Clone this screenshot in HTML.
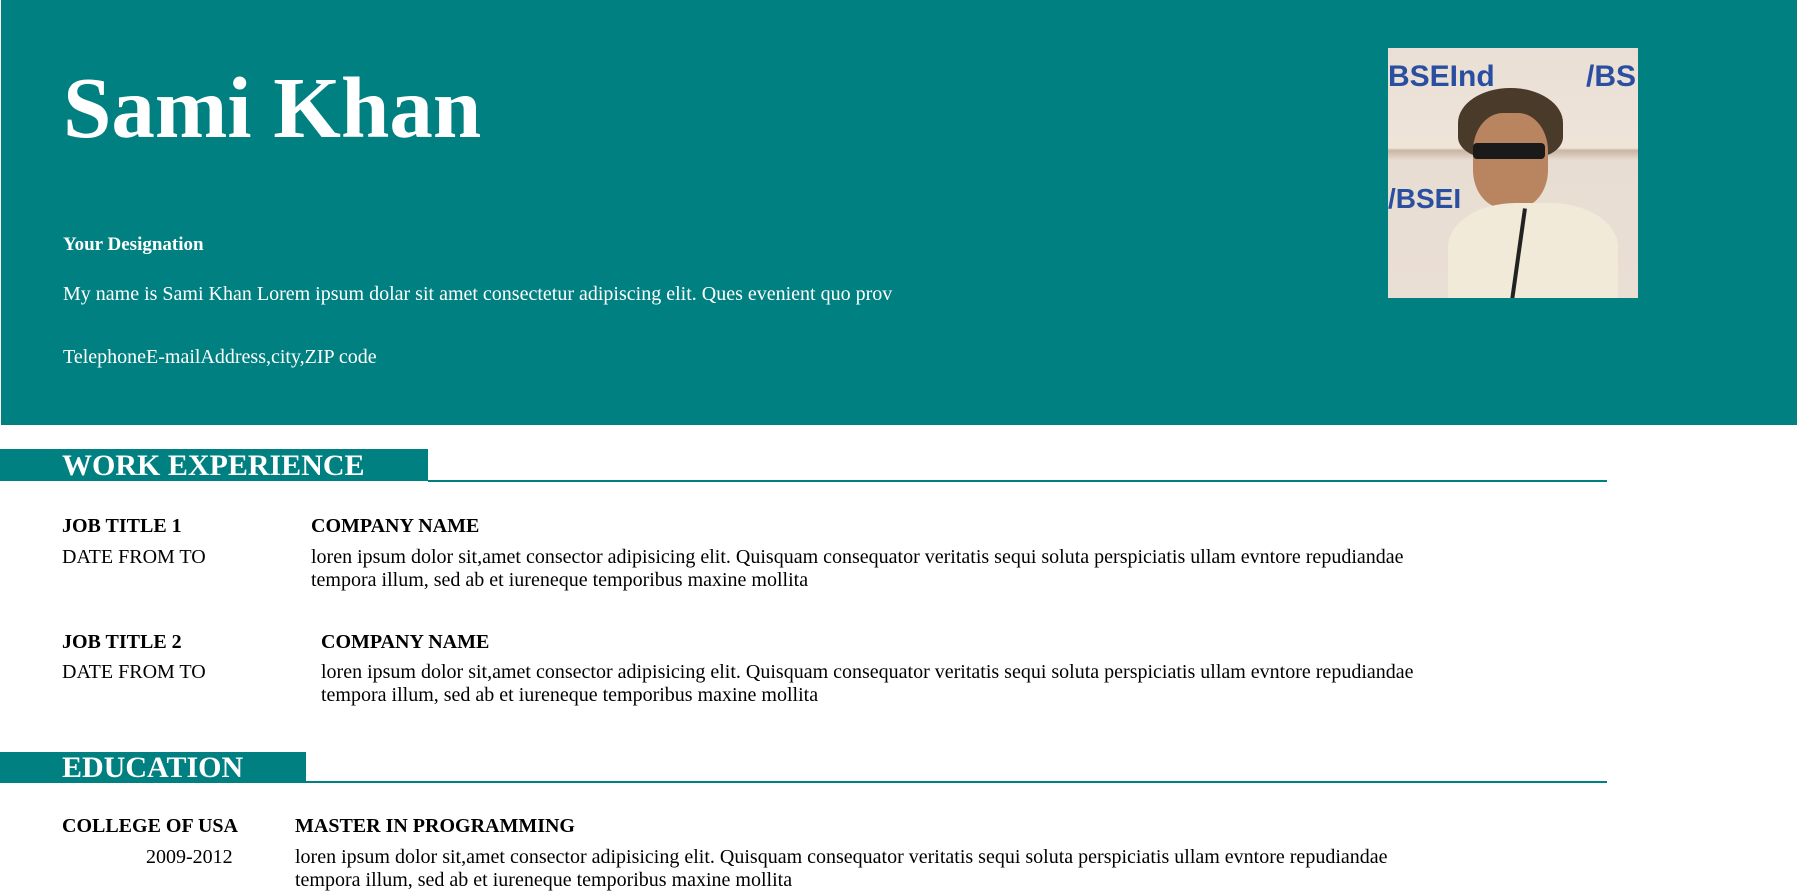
<!DOCTYPE html>
<html><head><meta charset="utf-8"><style>
*{margin:0;padding:0;box-sizing:border-box}
body{width:1797px;height:895px;overflow:hidden;background:#fff;font-family:"Liberation Serif",serif;color:#000;position:relative}
.hdr{position:absolute;left:0;top:0;width:1797px;height:425px;background:#008080;color:#fff;border-left:1px solid #fff}
.a{position:absolute;white-space:nowrap}
h1{position:absolute;left:62px;top:64px;font-size:87px;font-weight:bold;line-height:1;white-space:nowrap}
.band{position:absolute;left:0;background:#008080;color:#fff;font-weight:bold;font-size:30px;padding-left:62px}
.line{position:absolute;height:2px;background:#008080}
.b{font-weight:bold;font-size:20px}
.t{font-size:20px;line-height:23px}
.photo{position:absolute;left:1387px;top:48px;width:250px;height:250px;overflow:hidden;background:linear-gradient(180deg,#e9dfd6 0%,#efe4d8 40%,#c9b5a3 41%,#e8ddd2 45%,#eadfd4 100%)}
</style></head><body>
<div class="hdr">
<h1>Sami Khan</h1>
<div class="a b" style="left:62px;top:234px;font-size:19px">Your Designation</div>
<div class="a t" style="left:62px;top:283px">My name is Sami Khan Lorem ipsum dolar sit amet consectetur adipiscing elit. Ques evenient quo prov</div>
<div class="a t" style="left:62px;top:346px">TelephoneE-mailAddress,city,ZIP code</div>
<div class="photo">
<div class="a" style="left:0;top:12px;font:bold 30px 'Liberation Sans',sans-serif;color:#2a4fa0">BSEInd</div>
<div class="a" style="left:198px;top:12px;font:bold 30px 'Liberation Sans',sans-serif;color:#2a4fa0">/BS</div>
<div class="a" style="left:0;top:135px;font:bold 28px 'Liberation Sans',sans-serif;color:#2a4fa0">/BSEI</div>
<div class="a" style="left:70px;top:40px;width:105px;height:70px;border-radius:50% 50% 30% 30%;background:#4a3a2a"></div>
<div class="a" style="left:85px;top:65px;width:75px;height:95px;border-radius:40%;background:#b98460"></div>
<div class="a" style="left:85px;top:95px;width:72px;height:16px;background:#1a1a1a;border-radius:4px"></div>
<div class="a" style="left:60px;top:155px;width:170px;height:110px;border-radius:40% 40% 0 0;background:#f2ead8"></div>
<div class="a" style="left:128px;top:160px;width:4px;height:100px;background:#222;transform:rotate(8deg)"></div>
</div>
</div>

<div class="band" style="top:449px;width:428px;height:32px;line-height:34px">WORK EXPERIENCE</div>
<div class="line" style="left:428px;top:480px;width:1179px"></div>

<div class="a b" style="left:62px;top:515px">JOB TITLE 1</div>
<div class="a b" style="left:311px;top:515px">COMPANY NAME</div>
<div class="a t" style="left:62px;top:546px">DATE FROM TO</div>
<div class="a t" style="left:311px;top:546px">loren ipsum dolor sit,amet consector adipisicing elit. Quisquam consequator veritatis sequi soluta perspiciatis ullam evntore repudiandae<br>tempora illum, sed ab et iureneque temporibus maxine mollita</div>

<div class="a b" style="left:62px;top:631px">JOB TITLE 2</div>
<div class="a b" style="left:321px;top:631px">COMPANY NAME</div>
<div class="a t" style="left:62px;top:661px">DATE FROM TO</div>
<div class="a t" style="left:321px;top:661px">loren ipsum dolor sit,amet consector adipisicing elit. Quisquam consequator veritatis sequi soluta perspiciatis ullam evntore repudiandae<br>tempora illum, sed ab et iureneque temporibus maxine mollita</div>

<div class="band" style="top:752px;width:306px;height:31px;line-height:31px">EDUCATION</div>
<div class="line" style="left:306px;top:781px;width:1301px"></div>

<div class="a b" style="left:62px;top:815px">COLLEGE OF USA</div>
<div class="a b" style="left:295px;top:815px">MASTER IN PROGRAMMING</div>
<div class="a t" style="left:146px;top:846px">2009-2012</div>
<div class="a t" style="left:295px;top:846px">loren ipsum dolor sit,amet consector adipisicing elit. Quisquam consequator veritatis sequi soluta perspiciatis ullam evntore repudiandae<br>tempora illum, sed ab et iureneque temporibus maxine mollita</div>
</body></html>
